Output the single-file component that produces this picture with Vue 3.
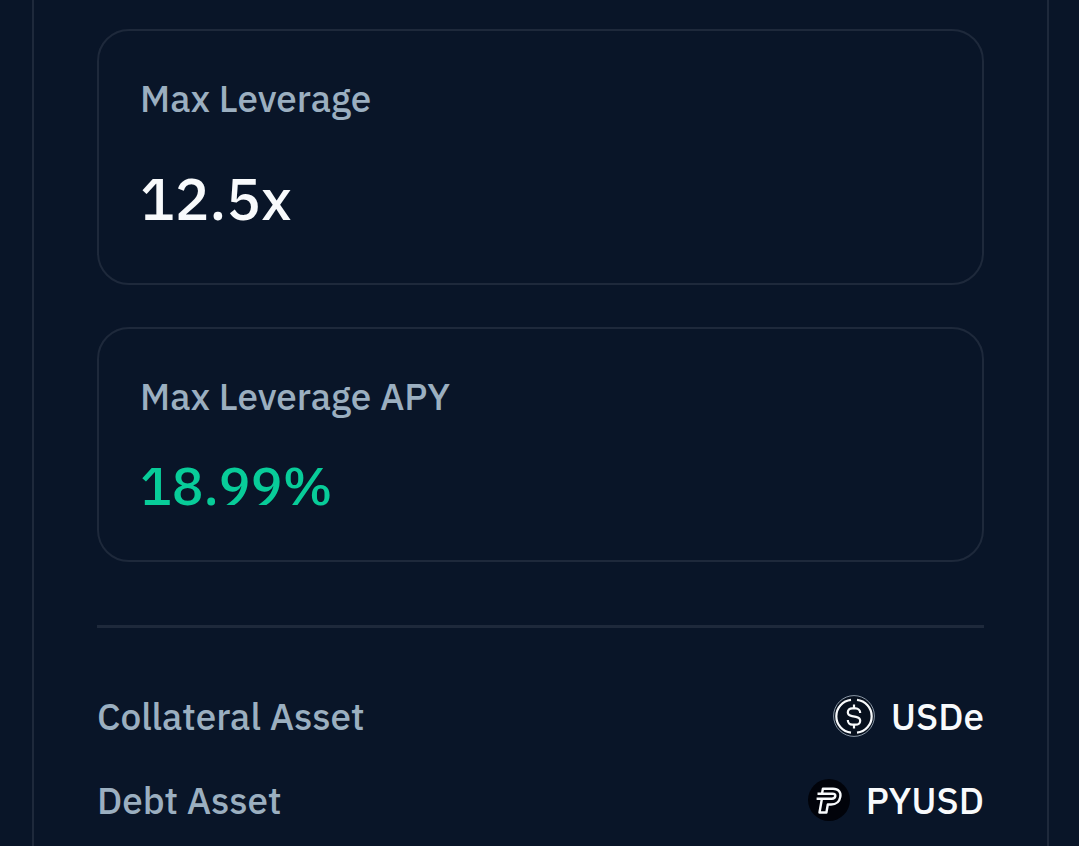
<script setup>
const stats = [
  { label: 'Max Leverage', value: '12.5x', kind: 'leverage' },
  { label: 'Max Leverage APY', value: '18.99%', kind: 'apy' },
]
const assets = [
  { label: 'Collateral Asset', name: 'USDe' },
  { label: 'Debt Asset', name: 'PYUSD' },
]
</script>

<template>
  <main class="page">
    <section class="panel">
      <dl v-for="stat in stats" :key="stat.label" class="card" :class="stat.kind">
        <dt class="label">{{ stat.label }}</dt>
        <dd class="value">{{ stat.value }}</dd>
      </dl>
      <hr class="divider" />
      <dl class="assets">
        <div v-for="asset in assets" :key="asset.name" class="row">
          <dt class="label">{{ asset.label }}</dt>
          <dd class="asset">
            <svg v-if="asset.name === 'USDe'" class="icon" viewBox="0 0 42 42" fill="none" stroke="#f8fafc" aria-hidden="true">
              <circle cx="21" cy="21" r="20.4" fill="#07101e" stroke="#9aa7b6" stroke-width=".9" />
              <path d="M18 4.800a16.500 16.500 0 0 0 0 32.800M24 4.800a16.500 16.500 0 0 1 0 32.800" stroke-width="2.200" />
              <path d="M21 9.500v4M21 29.500v4M27.200 18c0-2.600-2-4.700-4.500-4.700h-3.400c-2.600 0-4.500 1.700-4.500 4s1.600 3.300 4.200 3.800l4 .7c2.600.5 4.200 1.600 4.200 3.900s-1.900 4-4.500 4h-3.400c-2.500 0-4.500-1.900-4.500-4.600" stroke-width="2.200" />
            </svg>
            <svg v-else class="icon" viewBox="0 0 42 42" fill="none" stroke="#f8fafc" stroke-width="2.400" stroke-linejoin="round" aria-hidden="true">
              <circle cx="21" cy="21" r="21" fill="#01030a" stroke="none" />
              <path d="M14 14.700 14.900 9.700H25c5.400 0 8.200 3.400 7.300 8.200-.9 5-4.300 7.600-9.300 7.600h-3.200L18.400 33.500h-6.900L13.900 19.700" />
              <path d="M9.500 14.700h15c2.200 0 3.100 1 2.800 2.600-.3 1.600-1.500 2.400-3.500 2.400H8.600" />
            </svg>
            <span>{{ asset.name }}</span>
          </dd>
        </div>
      </dl>
    </section>
  </main>
</template>

<style>
body {
  margin: 0;
  background: #091528;
}
</style>

<style scoped>
.page {
  box-sizing: border-box;
  min-height: 100vh;
  padding: 0 30px 0 32px;
  display: flex;
  background: #091528;
  font-family: "IBM Plex Sans", "Noto Sans CJK SC", sans-serif;
  font-size: 37px;
  line-height: 48px;
  font-weight: 500;
  color: #f8fafc;
}
.panel {
  flex: 1;
  min-width: 0;
  padding: 29px 63px 0;
  border: solid #1e293b;
  border-width: 0 2px;
}
.card {
  margin: 0 0 42px;
  padding: 43px 41px;
  border: 2px solid #1e293b;
  border-radius: 32px;
}
.label {
  color: #9bafc0;
}
.value {
  margin: 0;
  font-size: 58px;
  line-height: 72px;
}
.leverage .value {
  padding: 41px 0 5px;
}
.apy .value {
  padding: 34px 0 0;
  font-size: 53px;
  line-height: 63px;
  color: #08cc99;
}
.divider {
  height: 3px;
  margin: 63px 0 0;
  border: 0;
  background: #1e293b;
}
.assets {
  display: flex;
  flex-direction: column;
  gap: 36px;
  margin: 64px 0 0;
}
.row,
.asset {
  display: flex;
  align-items: center;
}
.row {
  justify-content: space-between;
}
.asset {
  gap: 16px;
  margin: 0;
}
.icon {
  width: 42px;
  height: 42px;
}
</style>
